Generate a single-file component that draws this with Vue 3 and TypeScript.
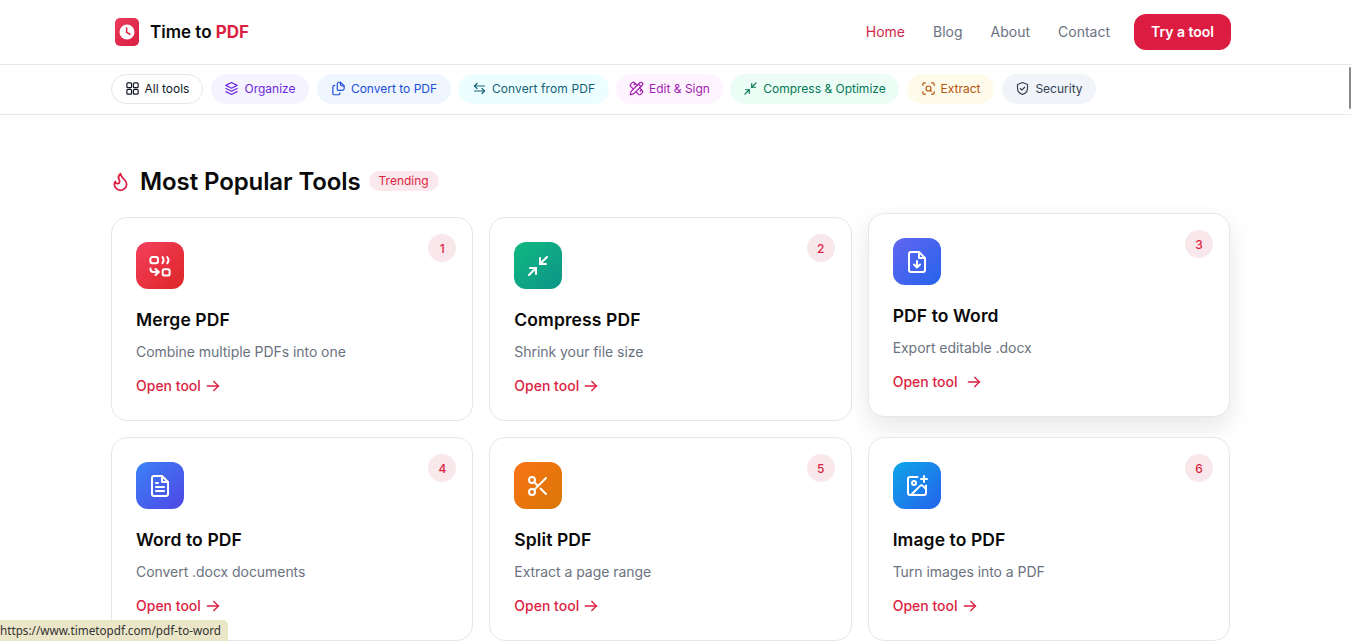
<script setup lang="ts">
interface Pill { label: string; cls: string; paths: string[] }
interface Tool { n: number; title: string; desc: string; cls: string; paths: string[]; hover?: boolean }

const nav = ['Blog', 'About', 'Contact']

const compress = ['m14 10 7-7', 'M20 10h-6V4', 'm3 21 7-7', 'M4 14h6v6']

const pills: Pill[] = [
  { label: 'Organize', cls: 'p-violet', paths: ['M12 2.5 3 7l9 4.5L21 7z', 'm3 12 9 4.5 9-4.5', 'm3 17 9 4.5 9-4.5'] },
  { label: 'Convert to PDF', cls: 'p-blue', paths: ['M15 2h-2a3 3 0 0 0-3 3v8a2 2 0 0 0 2 2h6a3 3 0 0 0 3-3V8z', 'M15 2v3a3 3 0 0 0 3 3h3', 'M6 7 4.500 7.500a2 2 0 0 0-1.500 2V20a2 2 0 0 0 2 2h7a2 2 0 0 0 2-2v-1'] },
  { label: 'Convert from PDF', cls: 'p-cyan', paths: ['M20 8H4', 'm8 4-4 4 4 4', 'M4 16h16', 'm16 12 4 4-4 4'] },
  { label: 'Edit & Sign', cls: 'p-fuchsia', paths: ['M13 7 8.700 2.700a2.410 2.410 0 0 0-3.400 0L2.700 5.300a2.410 2.410 0 0 0 0 3.400L7 13', 'm8 6 2-2', 'm18 16 2-2', 'm17 11 4.300 4.300c.94.94.94 2.460 0 3.400l-2.600 2.600c-.94.94-2.460.94-3.400 0L11 17', 'M21.174 6.812a1 1 0 0 0-3.986-3.987L3.842 16.174a2 2 0 0 0-.5.83l-1.321 4.352a.5.5 0 0 0 .623.622l4.353-1.320a2 2 0 0 0 .83-.497z', 'm15 5 4 4'] },
  { label: 'Compress & Optimize', cls: 'p-green', paths: compress },
  { label: 'Extract', cls: 'p-amber', paths: ['M3 7V5a2 2 0 0 1 2-2h2', 'M17 3h2a2 2 0 0 1 2 2v2', 'M21 17v2a2 2 0 0 1-2 2h-2', 'M7 21H5a2 2 0 0 1-2-2v-2', 'M12 8a4 4 0 1 0 0 8 4 4 0 0 0 0-8z', 'm14.500 14.500 2 2'] },
  { label: 'Security', cls: 'p-slate', paths: ['M12 2.500 20 5.500v6c0 5-3.500 8.500-8 10-4.500-1.500-8-5-8-10v-6z', 'm8.500 12 2.500 2.500 4.500-4.500'] },
]

const tools: Tool[] = [
  { n: 1, title: 'Merge PDF', desc: 'Combine multiple PDFs into one', cls: 'g-rose', paths: ['M4.400 3h3.600a2 2 0 0 1 2 2v2.300a2 2 0 0 1-2 2H4.400a2 2 0 0 1-2-2V5a2 2 0 0 1 2-2z', 'M14.500 3c1.400 2 1.400 4.300 0 6.300', 'M19.200 3c1.600 2 1.600 4.300 0 6.300', 'M2.400 14.500c0 2.300 1 3.500 3 3.500h5', 'm7.500 15 3.300 3-3.300 3', 'M16.200 15.300h3.900a1.500 1.500 0 0 1 1.500 1.500v3.300a1.500 1.500 0 0 1-1.500 1.500h-3.900a1.500 1.500 0 0 1-1.500-1.500v-3.300a1.500 1.500 0 0 1 1.500-1.500z'] },
  { n: 2, title: 'Compress PDF', desc: 'Shrink your file size', cls: 'g-green', paths: compress },
  { n: 3, title: 'PDF to Word', desc: 'Export editable .docx', cls: 'g-indigo', hover: true, paths: ['M14 2H6a2 2 0 0 0-2 2v16a2 2 0 0 0 2 2h12a2 2 0 0 0 2-2V8z', 'M14 2v6h6', 'M12 11v6', 'm9 14.500 3 3 3-3'] },
  { n: 4, title: 'Word to PDF', desc: 'Convert .docx documents', cls: 'g-blue', paths: ['M14 2H6a2 2 0 0 0-2 2v16a2 2 0 0 0 2 2h12a2 2 0 0 0 2-2V8z', 'M14 2v6h6', 'M8 9h2', 'M8 13h8', 'M8 17h8'] },
  { n: 5, title: 'Split PDF', desc: 'Extract a page range', cls: 'g-orange', paths: ['M6 3a3 3 0 1 0 0 6 3 3 0 0 0 0-6z', 'M6 15a3 3 0 1 0 0 6 3 3 0 0 0 0-6z', 'M20 4 8.120 15.880', 'M14.470 14.480 20 20', 'M8.120 8.120 12 12'] },
  { n: 6, title: 'Image to PDF', desc: 'Turn images into a PDF', cls: 'g-sky', paths: ['M16 5h6', 'M19 2v6', 'M21 11.500V19a2 2 0 0 1-2 2H5a2 2 0 0 1-2-2V5a2 2 0 0 1 2-2h7.500', 'm21 15-3.100-3.100a2 2 0 0 0-2.800 0L6 21', 'M9 7a2 2 0 1 0 0 4 2 2 0 0 0 0-4z'] },
]
</script>

<template>
  <div class="page">
    <header class="top">
      <div class="wrap top-row">
        <a class="brand">
          <span class="logo">
            <svg viewBox="0 0 24 24" width="18" height="18">
              <circle cx="12" cy="12" r="10" fill="#fff" />
              <path d="M11.500 6.500V12.500L16 15" fill="none" stroke="#dc1f42" stroke-width="2" stroke-linecap="round" />
            </svg>
          </span>
          <span class="brand-text">Time to <b>PDF</b></span>
        </a>
        <nav class="nav">
          <a class="nav-link active">Home</a>
          <a v-for="item in nav" :key="item" class="nav-link">{{ item }}</a>
          <a class="cta">Try a tool</a>
        </nav>
      </div>
    </header>

    <div class="catbar">
      <div class="wrap pills">
        <a class="pill p-all">
          <svg class="pill-icon" viewBox="0 0 24 24">
            <rect x="3" y="3" width="7.500" height="7.500" rx="1.500" />
            <rect x="13.500" y="3" width="7.500" height="7.500" rx="1.500" />
            <rect x="3" y="13.500" width="7.500" height="7.500" rx="1.500" />
            <rect x="13.500" y="13.500" width="7.500" height="7.500" rx="1.500" />
          </svg>
          All tools
        </a>
        <a v-for="p in pills" :key="p.label" class="pill" :class="p.cls">
          <svg class="pill-icon" viewBox="0 0 24 24"><path v-for="d in p.paths" :key="d" :d="d" /></svg>
          {{ p.label }}
        </a>
      </div>
    </div>

    <main class="wrap main">
      <div class="heading">
        <svg class="flame" viewBox="0 0 24 24">
          <path d="M8.500 14.500A2.500 2.500 0 0 0 11 12c0-1.380-.5-2-1-3-1.072-2.143-.224-4.054 2-6 .5 2.500 2 4.900 4 6.500 2 1.600 3 3.500 3 5.500a7 7 0 1 1-14 0c0-1.153.433-2.294 1-3a2.500 2.500 0 0 0 2.500 2.500z" />
        </svg>
        <h2>Most Popular Tools</h2>
        <span class="trend">Trending</span>
      </div>

      <div class="grid">
        <a v-for="t in tools" :key="t.n" class="card" :class="{ hovered: t.hover }">
          <span class="rank">{{ t.n }}</span>
          <span class="tile" :class="t.cls">
            <svg viewBox="0 0 24 24" width="24" height="24"><path v-for="d in t.paths" :key="d" :d="d" /></svg>
          </span>
          <h3>{{ t.title }}</h3>
          <p>{{ t.desc }}</p>
          <span class="open">
            Open tool
            <svg class="arrow" viewBox="0 0 24 24"><path d="M3.500 12h17" /><path d="m13 5 7 7-7 7" /></svg>
          </span>
        </a>
      </div>
    </main>

    <div class="thumb"></div>
    <div class="status">https://www.timetopdf.com/pdf-to-word</div>
  </div>
</template>

<style>
html, body { margin: 0; height: 641px; overflow: hidden; background: #fff; }
</style>

<style scoped>
.page {
  position: relative;
  height: 641px;
  overflow: hidden;
  background: #fff;
  font-family: Inter, "Liberation Sans", sans-serif;
  color: #0a0a0a;
}
.wrap { width: 1119px; margin-left: 111px; }
.top { height: 64px; border-bottom: 1px solid #e5e7eb; }
.top-row { display: flex; align-items: center; justify-content: space-between; height: 64px; }
.brand { display: flex; align-items: center; gap: 11px; margin-left: 4px; }
.logo {
  width: 24px; height: 28px; border-radius: 5px;
  background: linear-gradient(135deg, #ec3a58, #d81f45);
  display: flex; align-items: center; justify-content: center;
}
.brand-text { font-size: 17px; font-weight: 600; padding-bottom: 1px; }
.brand-text b { color: #dc1f42; font-weight: 700; }
.nav { display: flex; align-items: center; gap: 28px; margin-right: -1px; }
.nav-link { font-size: 14px; color: #6b7280; padding-bottom: 1px; }
.nav-link.active { color: #d0284a; }
.cta {
  box-sizing: border-box; margin-left: -4px; width: 97px; height: 36px; border-radius: 12px;
  background: #dc1c40; color: #fff; font-size: 14px; font-weight: 600; padding-bottom: 1px;
  display: flex; align-items: center; justify-content: center;
}
.catbar { height: 49px; border-bottom: 1px solid #e5e7eb; }
.pills { display: flex; align-items: flex-start; gap: 8px; height: 49px; padding-top: 9px; box-sizing: border-box; }
.pill {
  box-sizing: border-box; height: 30px; border-radius: 15px; padding-bottom: 1px;
  display: inline-flex; align-items: center; justify-content: center; gap: 5px;
  font-size: 12px; white-space: nowrap; flex: none;
}
.pill-icon {
  width: 15px; height: 15px; fill: none; stroke: currentColor;
  stroke-width: 1.900; stroke-linecap: round; stroke-linejoin: round; flex: none;
}
.p-all { width: 92px; background: #fff; border: 1px solid #e5e7eb; color: #111827; }
.p-violet { width: 98px; background: #f5f3ff; color: #6d28d9; }
.p-blue { width: 134px; background: #eff6ff; color: #1d4ed8; }
.p-cyan { width: 151px; margin-left: -1px; background: #ecfeff; color: #155e75; letter-spacing: 0.1px; }
.p-fuchsia { width: 107px; margin-left: -1px; background: #fdf4ff; color: #a21caf; }
.p-green { width: 169px; margin-left: -1px; background: #ecfdf5; color: #047857; }
.p-amber { width: 87px; background: #fffbeb; color: #b45309; }
.p-slate { width: 94px; background: #f1f5f9; color: #334155; }
.main { padding-top: 51px; }
.heading { display: flex; align-items: center; height: 30px; margin-bottom: 21px; }
.flame {
  width: 21px; height: 21px; margin-right: 8px; margin-left: -1px; fill: none; stroke: #dc1f42;
  stroke-width: 2; stroke-linecap: round; stroke-linejoin: round;
}
h2 { margin: 0 0 0 1px; font-size: 24px; font-weight: 600; letter-spacing: -0.1px; }
.trend {
  box-sizing: border-box; margin-left: 8px; height: 20px; padding: 0 10px 1px; border-radius: 10px;
  background: #fbe8ec; color: #dc1f42; font-size: 12px;
  display: flex; align-items: center;
}
.grid { display: grid; grid-template-columns: repeat(3, 1fr); gap: 16px; }
.card {
  position: relative; box-sizing: border-box; height: 204px; padding: 24px;
  border: 1px solid #e5e7eb; border-radius: 16px; background: #fff;
  display: flex; flex-direction: column; align-items: flex-start;
}
.card.hovered {
  transform: translateY(-4px);
  box-shadow: 0 10px 24px rgba(17, 24, 39, 0.10);
}
.rank {
  position: absolute; top: 16px; right: 16px; width: 28px; height: 28px; border-radius: 50%;
  background: #f9e8eb; color: #dc1f42; font-size: 12px; font-weight: 500;
  display: flex; align-items: center; justify-content: center;
}
.tile {
  width: 48px; height: 48px; border-radius: 12px;
  display: flex; align-items: center; justify-content: center;
}
.tile svg {
  fill: none; stroke: #fff; stroke-width: 2; stroke-linecap: round; stroke-linejoin: round;
}
.g-rose { background: linear-gradient(135deg, #f43f5e, #dc2626); }
.g-green { background: linear-gradient(135deg, #10b981, #0d9488); }
.g-indigo { background: linear-gradient(135deg, #6366f1, #2563eb); }
.g-blue { background: linear-gradient(135deg, #3b82f6, #4f46e5); }
.g-orange { background: linear-gradient(135deg, #f97316, #d97706); }
.g-sky { background: linear-gradient(135deg, #0ea5e9, #2563eb); }
h3 { margin: 18px 0 0; font-size: 17.500px; line-height: 26px; font-weight: 600; letter-spacing: 0.1px; }
p { margin: 9px 0 0; font-size: 14px; line-height: 20px; color: #6b7280; letter-spacing: -0.05px; }
.open {
  margin-top: 14px; display: inline-flex; align-items: center; gap: 4px;
  font-size: 14px; line-height: 20px; font-weight: 500; color: #dc1f42;
}
.hovered .open { gap: 8px; }
.arrow {
  width: 16px; height: 16px; fill: none; stroke: currentColor;
  stroke-width: 2; stroke-linecap: round; stroke-linejoin: round;
}
.thumb {
  position: absolute; right: 0; top: 67px; width: 2px; height: 42px;
  background: #8a8a8a; border-radius: 1px;
}
.status {
  position: absolute; left: 0; bottom: 0; width: 228px; height: 21px; box-sizing: border-box;
  line-height: 21px; border-top-right-radius: 5px;
  background: #ebe6c8; color: #333; font-family: "Noto Sans", sans-serif; font-size: 11.700px; white-space: nowrap;
}
</style>
